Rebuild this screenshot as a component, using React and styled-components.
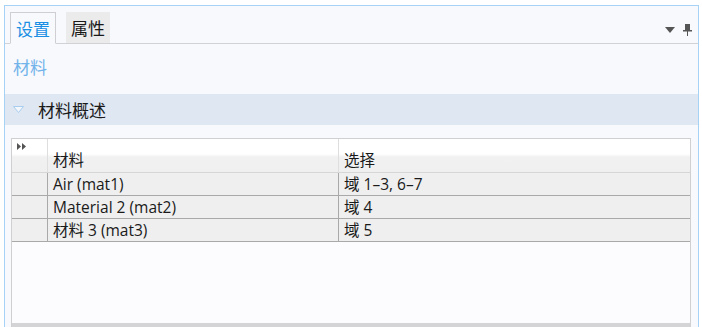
import React from 'react';
import styled, { createGlobalStyle } from 'styled-components';

const GlobalStyle = createGlobalStyle`
  html, body { margin: 0; padding: 0; background: #ffffff; }
  body { font-family: "Open Sans", "Noto Sans CJK SC", sans-serif; overflow: hidden; }
`;

const Panel = styled.div`
  margin: 5px 0 0 4px;
  width: 693px;
  height: 322px;
  border: 1px solid #a6d2f5;
  border-bottom: none;
  background: #f8f9fd;
  display: flex;
  flex-direction: column;
`;

const TabBar = styled.div`
  height: 37px;
  display: flex;
  align-items: flex-end;
  padding-left: 5px;
  border-bottom: 1px solid #d2d2d6;
`;

const Tab = styled.div`
  height: ${p => (p.active ? '30px' : '31px')};
  margin-bottom: ${p => (p.active ? '-1px' : '0')};
  margin-right: 10px;
  padding: 0 5px;
  display: flex;
  align-items: center;
  font-size: 17px;
  color: ${p => (p.active ? '#1a8fe3' : '#1a1a1a')};
  background: ${p => (p.active ? '#f8f9fd' : '#ebebeb')};
  border: ${p => (p.active ? '1px solid #cfcfd3' : 'none')};
  border-bottom: ${p => (p.active ? '1px solid #f8f9fd' : 'none')};
`;

const Tools = styled.div`
  margin-left: auto;
  margin-right: 6px;
  margin-bottom: 7px;
  display: flex;
  align-items: center;
  gap: 8px;
`;

const Label = styled.div`
  height: 50px;
  box-sizing: border-box;
  padding: 10px 0 0 8px;
  font-size: 17px;
  color: #72b3ea;
`;

const SectionHeader = styled.div`
  height: 31px;
  background: #dee7f2;
  display: flex;
  align-items: center;
  padding-left: 8px;
  font-size: 17px;
  color: #1a1a1a;
  gap: 14px;
`;

const TableWrap = styled.div`
  margin: 13px 7px 0 6px;
  flex: 1;
  border: 1px solid #d0d0d0;
  border-bottom: none;
  background: #fcfcfe;
  display: flex;
  flex-direction: column;
`;

const Grid = styled.div`
  display: grid;
  grid-template-columns: 36px 291px 1fr;
`;

const HeadCell = styled.div`
  height: 34px;
  box-sizing: border-box;
  background: linear-gradient(#ffffff 0%, #ffffff 45%, #f1f1f2 55%, #efeff0 100%);
  border-right: ${p => (p.last ? 'none' : '1px solid #dedede')};
  border-bottom: 1px solid #d6d6d6;
  font-size: 15.5px;
  color: #1a1a1a;
  padding: 9px 0 0 5px;
  position: relative;
`;

const Cell = styled.div`
  height: 23px;
  box-sizing: border-box;
  background: #efefef;
  border-right: ${p => (p.last ? 'none' : '1px solid #a9a9a9')};
  border-bottom: 1px solid #a9a9a9;
  font-size: 15.5px;
  line-height: 22px;
  color: #1a1a1a;
  padding-left: 5px;
  white-space: nowrap;
`;

const Filler = styled.div`
  flex: 1;
`;

const ScrollBand = styled.div`
  height: 5px;
  background: #d4d4d6;
`;

const Triangle = () => (
  <svg width="11" height="7" viewBox="0 0 11 7">
    <path d="M0.5 0.5 L10.5 0.5 L5.5 6.5 Z" fill="#f4f8fd" stroke="#a9cdee" strokeWidth="1" />
  </svg>
);

const ExpandIcon = () => (
  <svg width="10" height="7" viewBox="0 0 10 7" style={{ position: 'absolute', left: 5, top: 4 }}>
    <path d="M0 0 L4 3.5 L0 7 Z M5 0 L9 3.5 L5 7 Z" fill="#555" />
  </svg>
);

const rows = [
  ['Air (mat1)', '域 1–3, 6–7'],
  ['Material 2 (mat2)', '域 4'],
  ['材料 3 (mat3)', '域 5'],
];

export default function App() {
  return (
    <>
      <GlobalStyle />
      <Panel>
        <TabBar>
          <Tab active>设置</Tab>
          <Tab>属性</Tab>
          <Tools>
            <svg width="10" height="6" viewBox="0 0 10 6">
              <path d="M0 0 L10 0 L5 6 Z" fill="#555" />
            </svg>
            <svg width="9" height="12" viewBox="0 0 9 12">
              <path d="M2 0 H7 V6 H9 V7.5 H5 V12 H4 V7.5 H0 V6 H2 Z" fill="#555" />
            </svg>
          </Tools>
        </TabBar>
        <Label>材料</Label>
        <SectionHeader>
          <Triangle />
          材料概述
        </SectionHeader>
        <TableWrap>
          <Grid>
            <HeadCell><ExpandIcon /></HeadCell>
            <HeadCell>材料</HeadCell>
            <HeadCell last>选择</HeadCell>
            {rows.map(([name, sel]) => (
              <React.Fragment key={name}>
                <Cell />
                <Cell>{name}</Cell>
                <Cell last>{sel}</Cell>
              </React.Fragment>
            ))}
          </Grid>
          <Filler />
          <ScrollBand />
        </TableWrap>
      </Panel>
    </>
  );
}
